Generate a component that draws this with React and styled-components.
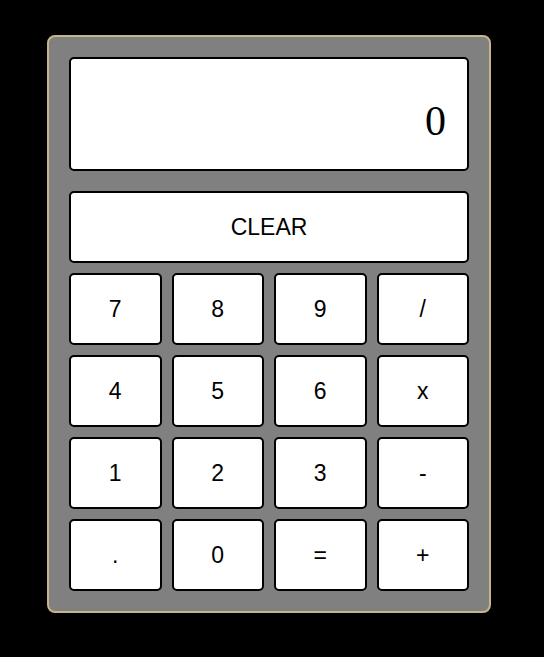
import React from 'react';
import styled, { createGlobalStyle } from 'styled-components';

const GlobalStyle = createGlobalStyle`
    html, body {
        margin: 0;
        background: #000;
    }
`;

const PageSC = styled.div`
    min-height: 657px;
    padding: 35px 0 0 47px;
    box-sizing: border-box;
    background: #000;
`;

const CalculatorSC = styled.div`
    width: 400px;
    padding: 20px;
    background: #808080;
    border: 2px solid #c8b48a;
    border-radius: 8px;
    display: flex;
    flex-direction: column;
    gap: 10px;
`;

const DisplaySC = styled.div`
    height: 110px;
    margin-bottom: 10px;
    padding: 14px 21px 0 20px;
    box-sizing: border-box;
    height: 114px;
    background: #fff;
    border: 2px solid #000;
    border-radius: 5px;
    display: flex;
    align-items: center;
    justify-content: flex-end;
    font-family: "Liberation Serif", serif;
    font-size: 42px;
    color: #000;
`;

const KeysSC = styled.div`
    display: grid;
    grid-template-columns: repeat(4, 1fr);
    grid-auto-rows: 72px;
    gap: 10px;
`;

const KeySC = styled.button`
    grid-column: ${p => (p.$wide ? '1 / -1' : 'auto')};
    margin: 0;
    padding: 0;
    background: #fff;
    border: 2px solid #000;
    border-radius: 5px;
    font-family: "Liberation Sans", Arial, sans-serif;
    font-size: 23px;
    color: #000;
    cursor: pointer;
`;

const keys = ['7', '8', '9', '/', '4', '5', '6', 'x', '1', '2', '3', '-', '.', '0', '=', '+'];

const App = () => {
    return (
        <PageSC>
            <GlobalStyle />
            <CalculatorSC>
                <DisplaySC>0</DisplaySC>
                <KeysSC>
                    <KeySC $wide>CLEAR</KeySC>
                    {keys.map(k => (
                        <KeySC key={k}>{k}</KeySC>
                    ))}
                </KeysSC>
            </CalculatorSC>
        </PageSC>
    );
};

export default App;
